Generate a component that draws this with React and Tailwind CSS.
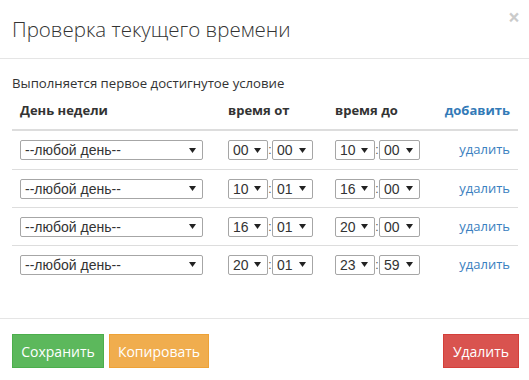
import React from 'react'

const ROWS = [
  { from: ['00', '00'], to: ['10', '00'] },
  { from: ['10', '01'], to: ['16', '00'] },
  { from: ['16', '01'], to: ['20', '00'] },
  { from: ['20', '01'], to: ['23', '59'] },
]

function Arrow() {
  return (
    <svg width="7" height="5" viewBox="0 0 7 5" className="shrink-0">
      <polygon points="0,0 7,0 3.5,5" fill="#222" />
    </svg>
  )
}

// Native-looking select drawn by hand
function FakeSelect({ value, width }) {
  return (
    <div
      className={`flex h-[20px] items-center justify-between rounded-[2px] border border-[#a6a6a6] bg-white pl-[4px] pr-[6px] font-['Liberation_Sans',Arial,sans-serif] text-[14px] leading-none text-[#333] ${width}`}
    >
      <span>{value}</span>
      <Arrow />
    </div>
  )
}

function TimePair({ pair }) {
  return (
    <div className="flex items-center">
      <FakeSelect value={pair[0]} width="w-[40px]" />
      <span className="w-[4px] text-center font-['Liberation_Sans',Arial,sans-serif] text-[12px] leading-none text-[#555]">:</span>
      <FakeSelect value={pair[1]} width="w-[41px]" />
    </div>
  )
}

export default function App() {
  return (
    <div className="relative h-[380px] w-[529px] overflow-hidden bg-white font-['Open_Sans',sans-serif] text-[#333]">
      {/* Header */}
      <div className="flex h-[59px] items-center border-b border-[#e5e5e5] px-3">
        <h4 className="text-[20.5px] font-light leading-none text-[#333]">Проверка текущего времени</h4>
        <span className="absolute right-[9px] top-[5px] text-[21px] font-bold leading-[24px] text-black opacity-20">×</span>
      </div>

      {/* Body */}
      <div className="px-3 pt-[14px] pb-[35px]">
        <p className="text-[13.2px] leading-[20px]">Выполняется первое достигнутое условие</p>
        <div className="w-[506px]">
          <div className="grid h-[38px] grid-cols-[208px_107px_107px_1fr] items-center border-b-2 border-[#ddd] px-2 text-[13px] font-bold">
            <span>День недели</span>
            <span>время от</span>
            <span>время до</span>
            <span className="text-right text-[#337ab7]">добавить</span>
          </div>
          {ROWS.map((row, i) => (
            <div
              key={i}
              className={`grid grid-cols-[208px_107px_107px_1fr] items-center px-2 text-[13px] ${i === 0 ? 'h-[38px]' : 'h-[38px] border-t border-[#ddd]'}`}
            >
              <FakeSelect value="--любой день--" width="w-[183px]" />
              <TimePair pair={row.from} />
              <TimePair pair={row.to} />
              <span className="text-right text-[#3a80c0]">удалить</span>
            </div>
          ))}
        </div>
      </div>

      {/* Footer */}
      <div className="flex items-center border-t border-[#e5e5e5] pl-3 pr-[10px] pt-[15px]">
        <button className="h-[34px] w-[92px] border border-[#4cae4c] bg-[#5cb85c] text-[14px] text-white">Сохранить</button>
        <button className="ml-[5px] h-[34px] w-[100px] border border-[#eea236] bg-[#f0ad4e] text-[14px] text-white">Копировать</button>
        <button className="ml-auto h-[34px] w-[76px] border border-[#d43f3a] bg-[#d9534f] text-[14px] text-white">Удалить</button>
      </div>
    </div>
  )
}
